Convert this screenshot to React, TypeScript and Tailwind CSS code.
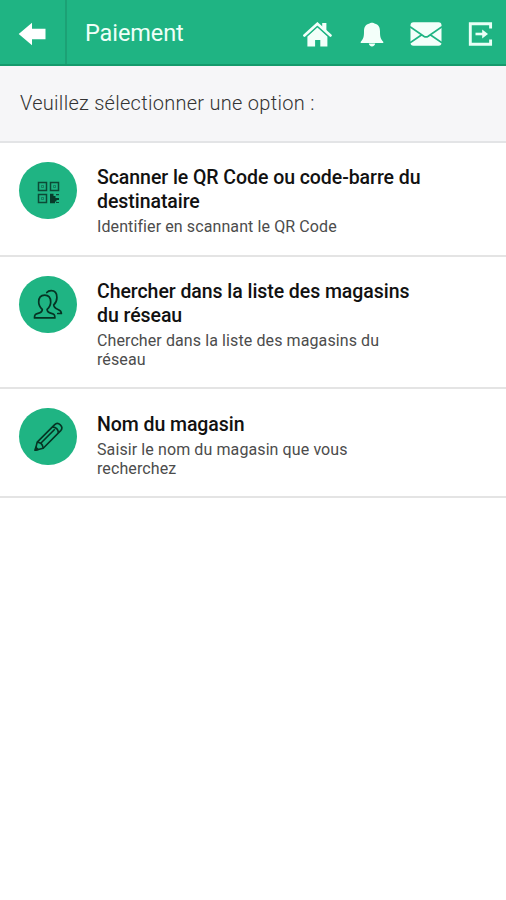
import type { ReactNode } from "react";

function BackIcon() {
  return (
    <svg width="28" height="24" viewBox="0 0 28 24" fill="#fff">
      <path d="M.7 12 14 .7v6.100h13.500v10.400H14v6.100z" />
    </svg>
  );
}

function HomeIcon() {
  return (
    <svg width="29" height="25" viewBox="0 0 29 25" fill="#f3fffa">
      <path d="M14.400 5.400 24.400 14.600v9.800h-7.100v-6.400h-5.200v6.400H4.400V14.600z" />
      <path d="M1.400 13.800 14.400 2 27.500 13.800" fill="none" stroke="#1fb483" strokeWidth="4.300" />
      <path d="M19.200 1h4.200v8l-4.200-3.800z" />
      <path d="M1.400 13.500 14.400 1.700 27.500 13.500" fill="none" stroke="#f3fffa" strokeWidth="2.600" strokeLinecap="round" />
    </svg>
  );
}

function BellIcon() {
  return (
    <svg width="24" height="25" viewBox="0 0 24 25" fill="#f3fffa">
      <path d="M12 .8c1.400 0 2 .3 2.500.8 4 .9 5.500 3.800 5.500 8 0 5.200.6 7.500 3 9.800.7.7.5 1.600-.6 1.600H1.600c-1.100 0-1.300-.9-.6-1.600 2.400-2.300 3-4.600 3-9.800 0-4.200 1.500-7.100 5.500-8C10 1.100 10.600.8 12 .8z" />
      <path d="M8.800 21.600h6.400c-.3 1.700-1.500 2.900-3.200 2.900s-2.900-1.200-3.200-2.900z" />
    </svg>
  );
}

function MailIcon() {
  return (
    <svg width="32" height="24" viewBox="0 0 32 24">
      <rect x=".5" y=".3" width="31" height="23.400" rx="3" fill="#f3fffa" />
      <path d="m0 4.800 13.800 9.400q2.200 1.400 4.400 0L32 4.800M0 20.700l11.800-8M32 20.700l-11.800-8" fill="none" stroke="#1fb483" strokeWidth="1.700" />
    </svg>
  );
}

function ExitIcon() {
  return (
    <svg width="25" height="24" viewBox="0 0 25 24" fill="none" stroke="#e9fff6" strokeWidth="2.900">
      <path d="M22.600 6.500V1.800H2.300v20.400h20.300v-4.700" />
      <path d="M7.500 12H16" strokeWidth="2.600" />
      <path d="m14.200 7.400 5.800 4.600-5.800 4.600z" fill="#e9fff6" stroke="none" />
    </svg>
  );
}

function QrIcon() {
  return (
    <svg className="h-[57px] w-[58px]" viewBox="0 0 58 57" fill="none" stroke="#0c4a36" strokeWidth="1.500">
      <path d="M19.500 20.500h8v8h-8zM31.500 20.500h8v8h-8zM19.500 32.500h8v8h-8z" />
      <path d="M22.500 23.500h2v2h-2zM34.500 23.500h2v2h-2zM22.500 35.500h2v2h-2z" strokeWidth=".8" strokeOpacity=".6" />
      <path d="M31 31.700h3.500v2.300h2v2h3.500v2h-2.500v1.500H36v1.700h-5z" fill="#083b2a" stroke="none" />
      <path d="M37 32.700h3M37 40.500h3" strokeWidth="1.200" />
    </svg>
  );
}

function PeopleIcon() {
  return (
    <svg className="h-[57px] w-[58px]" viewBox="0 0 58 57" fill="none" stroke="#063323" strokeWidth="1.700" strokeLinejoin="round" strokeLinecap="round">
      <path d="M15.500 41.900c0-3.200.7-3.700 3.500-4.500 3.200-.9 4.300-1.700 4.300-4-1.700-1.500-3.600-4.200-3.600-7.400 0-4.400 2.400-6.900 6-6.900s6 2.500 6 6.900c0 3.200-1.900 5.900-3.600 7.400 0 2.300 1.100 3.100 4.300 4 2.800.8 3.500 1.300 3.500 4.500z" />
      <path d="M27.800 16.500c1-1.300 2.500-1.900 4.400-1.900 3.700 0 5.700 2.500 5.700 6.800 0 3.200-1.500 5.900-3.200 7.400 0 2.300 1.100 3.300 3.900 4.500 2.800 1.100 3.800 2 3.800 4.200h-3.600" />
    </svg>
  );
}

function PencilIcon() {
  return (
    <svg className="h-[57px] w-[58px]" viewBox="0 0 58 57" fill="none" stroke="#063323" strokeWidth="1.600" strokeLinejoin="round">
      <path d="m16.200 42.300 2-8.200 17.500-17.500c3.500-3.500 9.500 2.300 6 6L24.200 40.200z" />
      <path d="M18.200 34.100c3.500.3 5.700 2.600 6 6.100M33.400 18.900c3.500.3 5.800 2.500 6 6M21.500 35.500l14.300-14.300" />
      <path d="m16.200 42.300.7-3 2.200 2.200z" fill="#063323" />
    </svg>
  );
}

type OptionProps = {
  icon: ReactNode;
  title: ReactNode;
  text: ReactNode;
  className: string;
};

function Option({ icon, title, text, className }: OptionProps) {
  return (
    <li className={`flex items-start border-b-2 border-[#e4e4e4] pl-[19px] ${className}`}>
      <span className="mt-[19px] mr-5 h-[57px] w-[58px] shrink-0 rounded-full bg-[#1fb483]">{icon}</span>
      <div className="whitespace-nowrap">
        <h2 className="text-[19.500px] leading-6 font-medium tracking-[-0.060px] text-[#111]">{title}</h2>
        <p className="pt-[4px] text-[16px] leading-[18.500px] tracking-[0.1px] text-[#4c4c4c]">{text}</p>
      </div>
    </li>
  );
}

export default function App() {
  return (
    <div className="h-[900px] w-[506px] overflow-hidden bg-white font-['Roboto',sans-serif]">
      <header className="flex h-[66px] border-b-2 border-[#159a6c] bg-[#1fb483] text-[#effff8]">
        <div className="flex w-[67px] items-center border-r-2 border-[#1ca175] pl-[18px] pt-[3px]">
          <BackIcon />
        </div>
        <h1 className="pl-[18px] pt-[18px] text-[23.500px] leading-[30px] tracking-[-0.1px]">Paiement</h1>
        <nav className="ml-auto flex items-center pr-[13px] pt-[4px]">
          <HomeIcon />
          <span className="ml-[28px]"><BellIcon /></span>
          <span className="ml-[26px]"><MailIcon /></span>
          <span className="ml-[26px]"><ExitIcon /></span>
        </nav>
      </header>
      <p className="h-[77px] whitespace-nowrap border-b-2 border-[#e3e4e6] bg-[#f6f6f8] pl-[20px] pt-[24px] text-[20px] leading-[26px] font-light tracking-[0.28px] text-[#333]">
        Veuillez sélectionner une option :
      </p>
      <ul>
        <Option
          className="h-[114px] pt-0 [&>div]:pt-[23px]"
          icon={<QrIcon />}
          title={<>Scanner le QR Code ou code-barre du<br />destinataire</>}
          text="Identifier en scannant le QR Code"
        />
        <Option
          className="h-[132px] [&>div]:pt-[23px]"
          icon={<PeopleIcon />}
          title={<>Chercher dans la liste des magasins<br />du réseau</>}
          text={<>Chercher dans la liste des magasins du<br />réseau</>}
        />
        <Option
          className="h-[109px] [&>div]:pt-[24px]"
          icon={<PencilIcon />}
          title="Nom du magasin"
          text={<>Saisir le nom du magasin que vous<br />recherchez</>}
        />
      </ul>
    </div>
  );
}
